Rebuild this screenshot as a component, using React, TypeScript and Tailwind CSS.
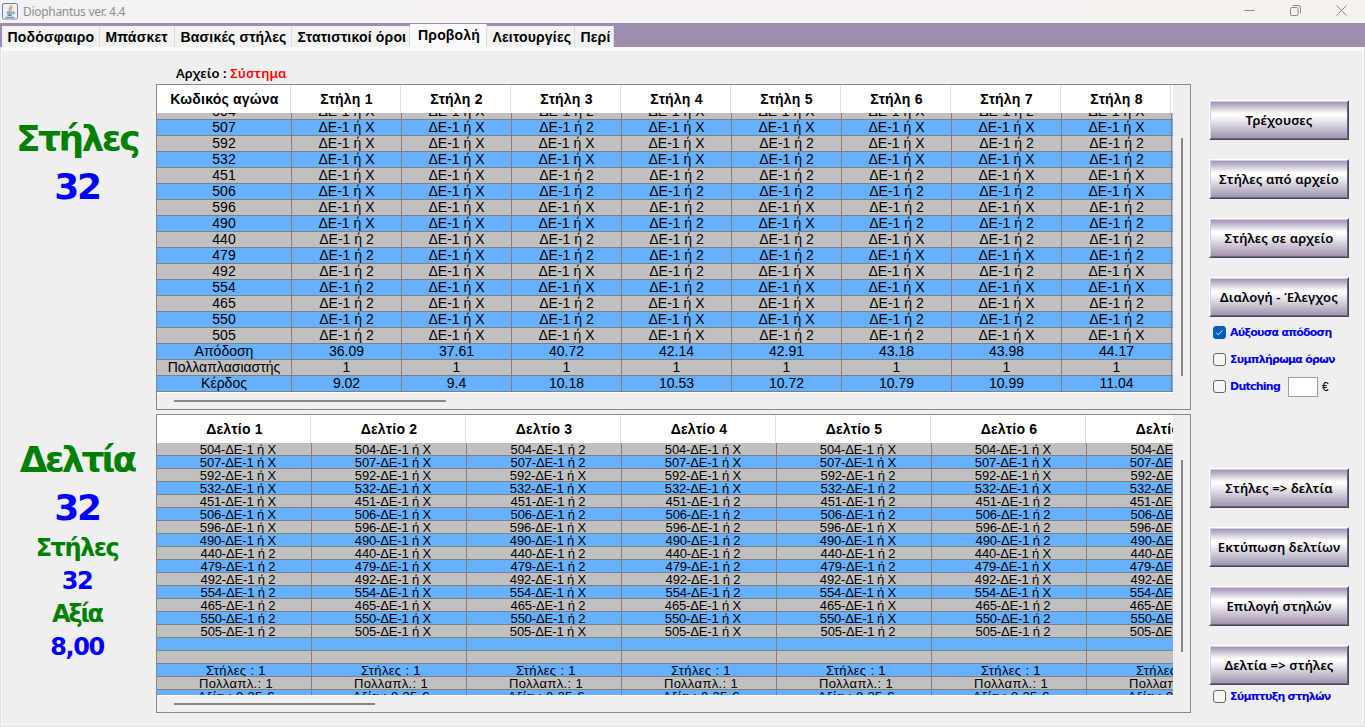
import clsx from 'clsx';

const tabs = [
  { name: 'Ποδόσφαιρο', width: 'w-[98px]' },
  { name: 'Μπάσκετ', width: 'w-[75px]' },
  { name: 'Βασικές στήλες', width: 'w-[117px]' },
  { name: 'Στατιστικοί όροι', width: 'w-[118px]' },
  { name: 'Προβολή', width: 'w-[77px]', active: true },
  { name: 'Λειτουργίες', width: 'w-[88px]' },
  { name: 'Περί', width: 'w-[39px]' },
];

// one letter per column: X or 2
const games = [
  { code: '504', picks: 'XX2XXX2X' },
  { code: '507', picks: 'XX2XXXXX' },
  { code: '592', picks: 'XXXX2X22' },
  { code: '532', picks: 'XXXX2XX2' },
  { code: '451', picks: 'XX2222XX' },
  { code: '506', picks: 'XX22222X' },
  { code: '596', picks: 'XXX2X2X2' },
  { code: '490', picks: 'XXX2X222' },
  { code: '440', picks: '2X222X22' },
  { code: '479', picks: '2X222XX2' },
  { code: '492', picks: '2XX2XX2X' },
  { code: '554', picks: '2XX2XXXX' },
  { code: '465', picks: '2X2XX2X2' },
  { code: '550', picks: '2X2XX222' },
  { code: '505', picks: '2XXX22XX' },
];

const columnRows = [
  ...games.map((g) => [g.code, ...g.picks.split('').map((p) => `ΔΕ-1 ή ${p}`)]),
  ['Απόδοση', '36.09', '37.61', '40.72', '42.14', '42.91', '43.18', '43.98', '44.17'],
  ['Πολλαπλασιαστής', '1', '1', '1', '1', '1', '1', '1', '1'],
  ['Κέρδος', '9.02', '9.4', '10.18', '10.53', '10.72', '10.79', '10.99', '11.04'],
];

const slips = [1, 2, 3, 4, 5, 6, 7];

const slipRows = [
  ...games.map((g) => slips.map((n) => `${g.code}-ΔΕ-1 ή ${g.picks[n - 1]}`)),
  slips.map(() => ''),
  slips.map(() => ''),
  slips.map(() => 'Στήλες : 1'),
  slips.map(() => 'Πολλαπλ.: 1'),
  slips.map(() => 'Αξία : 0.25 €'),
];

const rowColor = (i: number) => (i % 2 === 0 ? 'bg-[#c0c0c0]' : 'bg-[#66b0ff]');

function TitleBar() {
  return (
    <div className="h-[23px] shrink-0 flex items-center bg-linear-to-r from-[#f3f1f4] to-[#f7f1ef]">
      <svg className="ml-[2px] -mt-px" width="16" height="17" viewBox="0 0 16 17" fill="none">
        <rect x="0.5" y="0.5" width="15" height="15.5" rx="1.5" fill="#eef1f4" stroke="#6f8799" />
        <path d="M8.8 2.2c1.2 1.6-2.6 2.5-1.6 4.2.4.7.9 1 .9 1.6M10.6 4.2c-1.6.9-2.4 1.6-1.4 3" stroke="#e8832a" strokeWidth="1.1" />
        <path d="M4.6 9h6M5 10.8h5.2M5.6 12.4h4M3.6 14.2h8.6" stroke="#4b7da5" strokeWidth="1.1" />
        <path d="M10.9 9c2.2-.5 2 1.8-.2 2.4" stroke="#4b7da5" />
      </svg>
      <span className="ml-[5px] font-['Noto_Sans','Open_Sans',sans-serif] text-[12px] leading-[23px] tracking-[-0.3px] text-[#8f8d8f]">Diophantus ver. 4.4</span>
      <div className="ml-auto mr-[18px] flex items-center gap-[35px] -mt-[3px] text-[#8a8788]">
        <svg width="11" height="11" viewBox="0 0 11 11" fill="none" stroke="currentColor"><path d="M.5 5.5h10" /></svg>
        <svg width="11" height="11" viewBox="0 0 11 11" fill="none" stroke="currentColor">
          <rect x="0.5" y="2.5" width="7.5" height="8" rx="1.2" />
          <path d="M2.8 .5h5.4a2.3 2.3 0 0 1 2.3 2.3v5.4" />
        </svg>
        <svg width="11" height="11" viewBox="0 0 11 11" fill="none" stroke="currentColor"><path d="M.5.5l10 10M10.5.5l-10 10" /></svg>
      </div>
    </div>
  );
}

function TabStrip() {
  return (
    <div className="h-6 shrink-0 flex items-end pl-[2px] bg-[#9d8dae]">
      {tabs.map((tab) => (
        <div
          key={tab.name}
          className={clsx(
            tab.width,
            'shrink-0 whitespace-nowrap text-[14px] font-bold tracking-[0.18px] border-r border-[#dcdcdc]',
            tab.active ? 'h-[23px] pl-2 bg-[#fafafa] leading-[23px]' : 'h-[21px] pl-[5.5px] bg-[#f2f2f2] leading-[22px]'
          )}
        >
          {tab.name}
        </div>
      ))}
    </div>
  );
}

function HeaderCell({ text, width }: { text: string; width: string }) {
  return (
    <div className={clsx(width, 'shrink-0 h-7 pl-[2px] bg-white border-r border-[#dedede] text-center text-[14px] font-bold leading-[29px] tracking-[0.2px] whitespace-nowrap')}>
      {text}
    </div>
  );
}

function ColumnsTable() {
  return (
    <div className="h-[326px] w-[1035px] border border-[#828790] flex">
      <div className="w-[1016px] shrink-0">
        <div className="flex overflow-hidden bg-white">
          <HeaderCell text="Κωδικός αγώνα" width="w-[134px]" />
          {[1, 2, 3, 4, 5, 6, 7, 8].map((n) => (
            <HeaderCell key={n} text={`Στήλη ${n}`} width="w-[110px]" />
          ))}
        </div>
        <div className="h-[280px] overflow-hidden bg-white">
          <div className="-mt-[9px]">
            {columnRows.map((row, i) => (
              <div key={i} className={clsx('flex h-4 border-b border-[#808080] overflow-hidden', rowColor(i))}>
                {row.map((cell, j) => (
                  <div
                    key={j}
                    className={clsx(
                      'shrink-0 border-r border-[#808080] text-center text-[14px] leading-[15px] whitespace-nowrap',
                      j === 0 ? 'w-[135px]' : 'w-[110px]'
                    )}
                  >
                    {cell}
                  </div>
                ))}
              </div>
            ))}
          </div>
        </div>
        <div className="ml-[17px] mt-[7px] h-[2px] w-[272px] bg-[#868686]" />
      </div>
      <div className="ml-2 mt-[53px] h-[238px] w-[2px] bg-[#868686]" />
    </div>
  );
}

function SlipsTable() {
  return (
    <div className="mt-1 h-[299px] w-[1035px] border border-[#828790] flex">
      <div className="w-[1016px] shrink-0">
        <div className="flex overflow-hidden bg-white">
          {slips.map((n, i) => (
            <HeaderCell key={n} text={`Δελτίο ${n}`} width={i === 0 ? 'w-[154px]' : 'w-[155px]'} />
          ))}
        </div>
        <div className="h-[253px] overflow-hidden bg-white border-b border-white">
          {slipRows.map((row, i) => (
            <div key={i} className={clsx('flex h-[13px] border-b border-[#808080] overflow-hidden', rowColor(i))}>
              {row.map((cell, j) => (
                <div
                  key={j}
                  className={clsx(
                    'w-[155px] shrink-0 border-r border-[#808080] text-center text-[13px] leading-[13px] whitespace-nowrap',
                    i < games.length ? 'pl-2 tracking-[-0.15px]' : 'pl-1 tracking-[0.35px]'
                  )}
                >
                  {cell}
                </div>
              ))}
            </div>
          ))}
        </div>
        <div className="ml-[17px] mt-[7px] h-[2px] w-[201px] bg-[#868686]" />
      </div>
      <div className="ml-2 mt-[45px] h-[192px] w-[2px] bg-[#868686]" />
    </div>
  );
}

function MetalButton({ text }: { text: string }) {
  return (
    <button className="block h-10 w-[140px] border border-t-white border-l-white border-r-[#4d4559] border-b-[#4d4559]">
      <span className="flex h-full items-center justify-center border border-t-[#d9c8f2] border-l-[#d9c8f2] border-r-[#6d6380] border-b-[#6d6380] bg-[linear-gradient(#a294b1_0%,#ffffff_33%,#ffffff_38%,#a294b1_100%)] pt-[2px] font-['Noto_Sans',sans-serif] text-[13px] font-semibold tracking-[0.15px] whitespace-nowrap">
        {text}
      </span>
    </button>
  );
}

function CheckOption({ text, checked }: { text: string; checked?: boolean }) {
  return (
    <label className="flex h-[27px] items-center gap-1 whitespace-nowrap font-['DejaVu_Sans',sans-serif] text-[11px] font-bold tracking-[-0.75px] text-[#0000f0]">
      <span className={clsx('flex size-[13px] items-center justify-center rounded-[3px] border', checked ? 'border-[#005fb8] bg-[#005fb8]' : 'border-[#666666] bg-[#f5f5f5]')}>
        {checked && (
          <svg width="9" height="9" viewBox="0 0 9 9" fill="none" stroke="#fff" strokeWidth="0.9">
            <path d="M1.2 4.7l2 2 4.4-4.4" />
          </svg>
        )}
      </span>
      <span className="pt-px">{text}</span>
    </label>
  );
}

function Totals() {
  return (
    <div className="w-[155px] shrink-0 flex flex-col items-center pt-[64px] pr-[5px] font-['DejaVu_Sans',sans-serif] font-bold text-[#0000ff] whitespace-nowrap">
      <div className="text-[36px] leading-[48px] tracking-[-2.6px] text-[#008000]">Στήλες</div>
      <div className="text-[36px] leading-[48px] tracking-[-2.2px]">32</div>
      <div className="mt-[225px] text-[36px] leading-[48px] tracking-[-3px] text-[#008000]">Δελτία</div>
      <div className="text-[36px] leading-[48px] tracking-[-2.2px]">32</div>
      <div className="text-[24px] leading-[33px] tracking-[-1.5px] text-[#008000]">Στήλες</div>
      <div className="text-[24px] leading-[33px] tracking-[-1.4px]">32</div>
      <div className="text-[24px] leading-[33px] tracking-[-2.2px] text-[#008000]">Αξία</div>
      <div className="text-[24px] leading-[33px] tracking-[-1.4px]">8,00</div>
    </div>
  );
}

export default function App() {
  return (
    <div className="h-[727px] w-[1365px] overflow-hidden flex flex-col bg-[#f0f0f0] text-black font-['Liberation_Sans',Arial,sans-serif]">
      <TitleBar />
      <TabStrip />
      <div className="flex-1 flex border-x border-b border-[#e0e0e0] mb-px">
        <div className="flex-1 flex border-t-4 border-x border-b border-[#fafafa] bg-[#efefef]">
          <Totals />
          <div className="-ml-px w-[1035px] shrink-0">
            <div className="h-[33px] pl-[20px] pt-[12px] font-['Noto_Sans',sans-serif] text-[13px] font-semibold leading-[20px] tracking-[0.08px]">
              Αρχείο : <span className="text-[#ff0000]">Σύστημα</span>
            </div>
            <ColumnsTable />
            <SlipsTable />
          </div>
          <div className="ml-[18px] pt-[49px]">
            <div className="flex flex-col gap-[19px]">
              <MetalButton text="Τρέχουσες" />
              <MetalButton text="Στήλες από αρχείο" />
              <MetalButton text="Στήλες σε αρχείο" />
              <MetalButton text="Διαλογή - Έλεγχος" />
            </div>
            <div className="ml-1 mt-[2px]">
              <CheckOption text="Αύξουσα απόδοση" checked />
              <CheckOption text="Συμπλήρωμα όρων" />
              <div className="flex items-center">
                <CheckOption text="Dutching" />
                <div className="ml-2 h-5 w-[30px] border border-[#a0a0a0] bg-white" />
                <span className="ml-1 text-[12px]">€</span>
              </div>
            </div>
            <div className="mt-[68px] flex flex-col gap-[19px]">
              <MetalButton text="Στήλες => δελτία" />
              <MetalButton text="Εκτύπωση δελτίων" />
              <MetalButton text="Επιλογή στηλών" />
              <MetalButton text="Δελτία => στήλες" />
            </div>
            <div className="ml-1 -mt-[2px]">
              <CheckOption text="Σύμπτυξη στηλών" />
            </div>
          </div>
        </div>
      </div>
    </div>
  );
}
